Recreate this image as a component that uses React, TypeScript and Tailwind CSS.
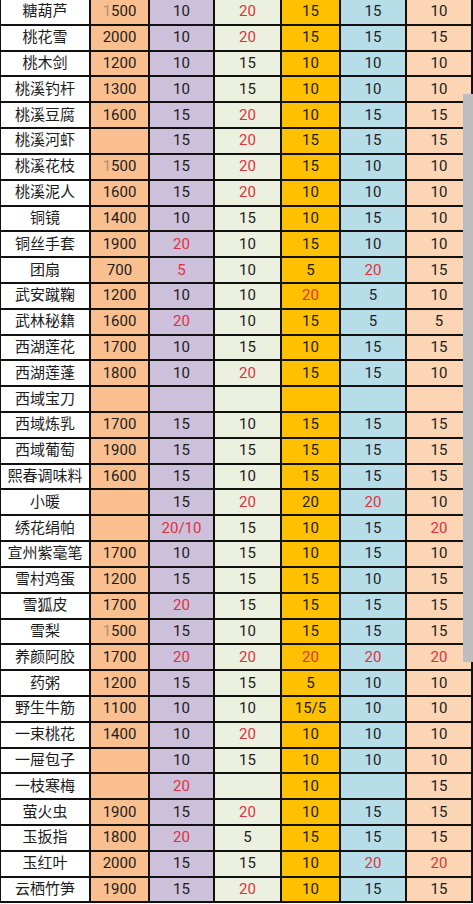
import React from "react"

// each cell: plain value, "r:" prefix = red text, "g:" prefix = faded leading digit
type Row = [string, string, string, string, string, string, string]

const rows: Row[] = [
  ["糖葫芦", "g:1500", "10", "r:20", "15", "15", "10"],
  ["桃花雪", "2000", "10", "r:20", "15", "15", "15"],
  ["桃木剑", "1200", "10", "15", "10", "10", "10"],
  ["桃溪钓杆", "1300", "10", "15", "10", "10", "10"],
  ["桃溪豆腐", "1600", "15", "r:20", "10", "15", "15"],
  ["桃溪河虾", "", "15", "r:20", "15", "15", "15"],
  ["桃溪花枝", "g:1500", "15", "r:20", "15", "10", "10"],
  ["桃溪泥人", "1600", "15", "r:20", "10", "10", "10"],
  ["铜镜", "1400", "10", "15", "10", "15", "10"],
  ["铜丝手套", "1900", "r:20", "10", "15", "10", "10"],
  ["团扇", "700", "r:5", "10", "5", "r:20", "15"],
  ["武安蹴鞠", "1200", "10", "10", "r:20", "5", "10"],
  ["武林秘籍", "1600", "r:20", "10", "15", "5", "5"],
  ["西湖莲花", "1700", "10", "15", "10", "15", "15"],
  ["西湖莲蓬", "1800", "10", "r:20", "15", "15", "10"],
  ["西域宝刀", "", "", "", "", "", ""],
  ["西域炼乳", "1700", "15", "10", "15", "15", "15"],
  ["西域葡萄", "1900", "15", "15", "15", "15", "15"],
  ["熙春调味料", "1600", "15", "10", "15", "15", "15"],
  ["小暖", "", "15", "r:20", "20", "r:20", "10"],
  ["绣花绢帕", "", "r:20/10", "15", "10", "15", "r:20"],
  ["宣州紫毫笔", "1700", "10", "15", "10", "15", "10"],
  ["雪村鸡蛋", "1200", "15", "15", "15", "10", "15"],
  ["雪狐皮", "1700", "r:20", "15", "15", "15", "15"],
  ["雪梨", "g:1500", "15", "10", "15", "15", "15"],
  ["养颜阿胶", "1700", "r:20", "r:20", "r:20", "r:20", "r:20"],
  ["药粥", "1200", "15", "15", "5", "10", "10"],
  ["野生牛筋", "1100", "10", "10", "15/5", "10", "10"],
  ["一束桃花", "1400", "10", "r:20", "10", "10", "10"],
  ["一屉包子", "", "10", "15", "10", "10", "10"],
  ["一枝寒梅", "", "r:20", "", "10", "", "15"],
  ["萤火虫", "1900", "15", "r:20", "10", "15", "15"],
  ["玉扳指", "1800", "r:20", "5", "15", "15", "15"],
  ["玉红叶", "2000", "15", "15", "10", "r:20", "r:20"],
  ["云栖竹笋", "1900", "15", "r:20", "10", "15", "15"],
]

const colBg = [
  "bg-white",
  "bg-[#fabf8f]",
  "bg-[#ccc0da]",
  "bg-[#ebf1de]",
  "bg-[#ffc000]",
  "bg-[#b7dee8]",
  "bg-[#fcd5b4]",
]

function CellText({ value }: { value: string }) {
  if (value.startsWith("r:")) {
    return <span className="text-[#dc3340]">{value.slice(2)}</span>
  }
  if (value.startsWith("g:")) {
    const v = value.slice(2)
    return (
      <span>
        <span className="text-[#a8907c]">{v[0]}</span>
        {v.slice(1)}
      </span>
    )
  }
  return <span>{value}</span>
}

export default function App() {
  return (
    <div
      className="relative w-[473px] h-[904px] overflow-hidden bg-white text-[15px] text-[#1c1c1c]"
      style={{ fontFamily: 'Roboto, "Noto Sans CJK SC", sans-serif' }}
    >
      <div className="border-l border-[#111]">
        {rows.map((row, i) => (
          <div
            key={i}
            className="grid grid-cols-[90px_59px_65px_67px_59px_66px_66px] h-[25.82px] border-b-2 border-[#111]"
          >
            {row.map((cell, j) => (
              <div
                key={j}
                className={`flex items-center justify-center leading-none border-r-2 border-[#111] ${colBg[j]}`}
              >
                <CellText value={cell} />
              </div>
            ))}
          </div>
        ))}
      </div>

      {/* scrollbar thumb */}
      <div className="absolute right-0 top-[94px] w-[10px] h-[568px] bg-[#bdbdbd]" />
    </div>
  )
}
